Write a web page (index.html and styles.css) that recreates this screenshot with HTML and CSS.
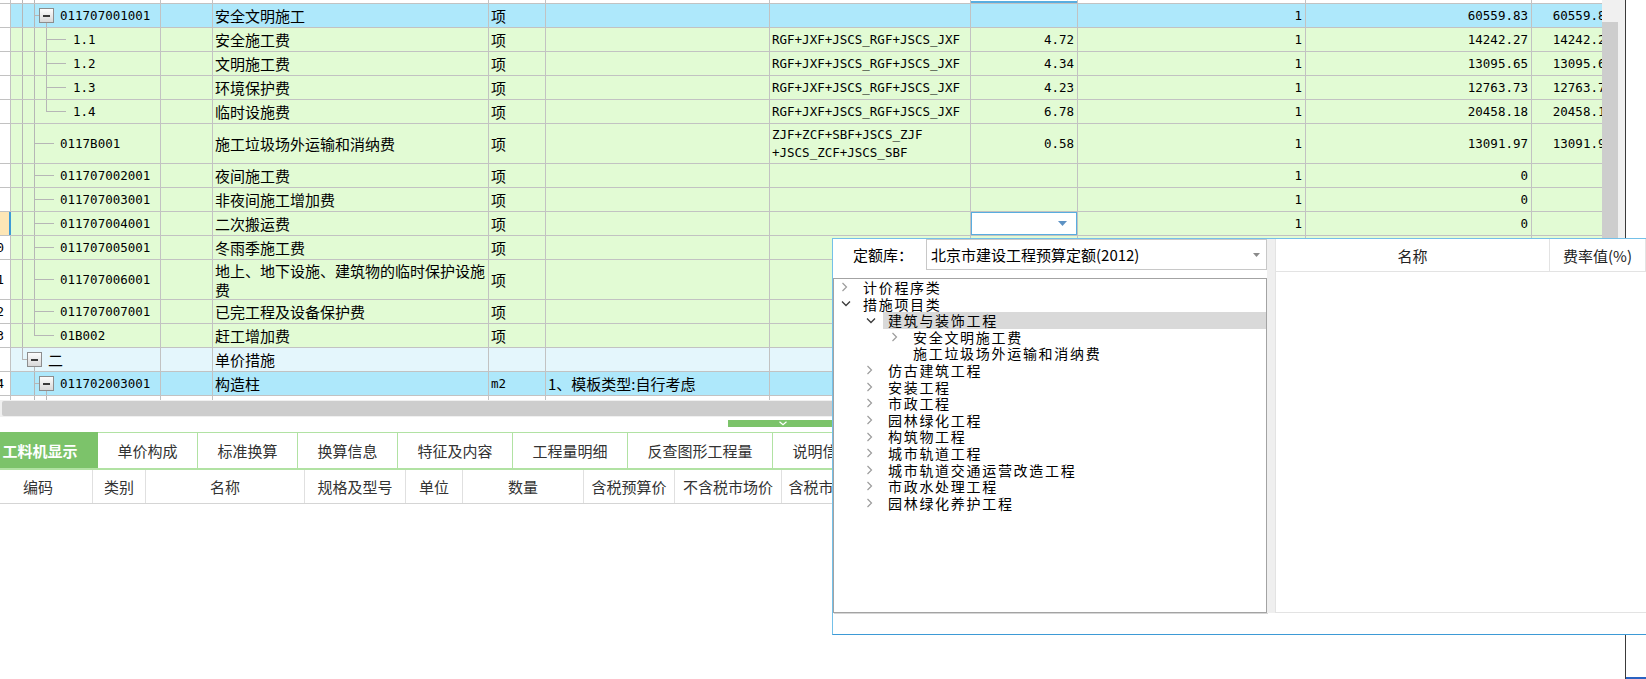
FILE: index.html
```html
<!DOCTYPE html>
<html lang="zh-CN">
<head>
<meta charset="utf-8">
<title>措施项目</title>
<link rel="stylesheet" href="styles.css">
</head>
<body>
<div class="app">
  <div class="top">
    <div class="grid">
      <div class="row part">
        <div class="rn"></div><div class="code t-top"></div><div></div><div></div><div></div><div></div><div></div><div class="fb"></div><div></div><div></div><div></div>
      </div>
      <div class="row blue">
        <div class="rn"></div>
        <div class="code t-p1"><span class="box"></span><span class="ct">011707001001</span></div>
        <div></div><div>安全文明施工</div><div>项</div><div></div><div class="m"></div><div class="m r"></div>
        <div class="m r">1</div><div class="m r">60559.83</div><div class="m r">60559.83</div>
      </div>
      <div class="row green">
        <div class="rn"></div>
        <div class="code t-c2"><span class="ct">1.1</span></div>
        <div></div><div>安全施工费</div><div>项</div><div></div><div class="m">RGF+JXF+JSCS_RGF+JSCS_JXF</div><div class="m r">4.72</div>
        <div class="m r">1</div><div class="m r">14242.27</div><div class="m r">14242.27</div>
      </div>
      <div class="row green">
        <div class="rn"></div>
        <div class="code t-c2"><span class="ct">1.2</span></div>
        <div></div><div>文明施工费</div><div>项</div><div></div><div class="m">RGF+JXF+JSCS_RGF+JSCS_JXF</div><div class="m r">4.34</div>
        <div class="m r">1</div><div class="m r">13095.65</div><div class="m r">13095.65</div>
      </div>
      <div class="row green">
        <div class="rn"></div>
        <div class="code t-c2"><span class="ct">1.3</span></div>
        <div></div><div>环境保护费</div><div>项</div><div></div><div class="m">RGF+JXF+JSCS_RGF+JSCS_JXF</div><div class="m r">4.23</div>
        <div class="m r">1</div><div class="m r">12763.73</div><div class="m r">12763.73</div>
      </div>
      <div class="row green">
        <div class="rn"></div>
        <div class="code t-c2l"><span class="ct">1.4</span></div>
        <div></div><div>临时设施费</div><div>项</div><div></div><div class="m">RGF+JXF+JSCS_RGF+JSCS_JXF</div><div class="m r">6.78</div>
        <div class="m r">1</div><div class="m r">20458.18</div><div class="m r">20458.18</div>
      </div>
      <div class="row green tall">
        <div class="rn"></div>
        <div class="code t-l1"><span class="ct">0117B001</span></div>
        <div></div><div>施工垃圾场外运输和消纳费</div><div>项</div><div></div><div class="m two">ZJF+ZCF+SBF+JSCS_ZJF<br>+JSCS_ZCF+JSCS_SBF</div><div class="m r">0.58</div>
        <div class="m r">1</div><div class="m r">13091.97</div><div class="m r">13091.97</div>
      </div>
      <div class="row green">
        <div class="rn"></div>
        <div class="code t-l1"><span class="ct">011707002001</span></div>
        <div></div><div>夜间施工费</div><div>项</div><div></div><div class="m"></div><div class="m r"></div>
        <div class="m r">1</div><div class="m r">0</div><div class="m r"></div>
      </div>
      <div class="row green">
        <div class="rn"></div>
        <div class="code t-l1"><span class="ct">011707003001</span></div>
        <div></div><div>非夜间施工增加费</div><div>项</div><div></div><div class="m"></div><div class="m r"></div>
        <div class="m r">1</div><div class="m r">0</div><div class="m r"></div>
      </div>
      <div class="row green">
        <div class="rn cur"></div>
        <div class="code t-l1"><span class="ct">011707004001</span></div>
        <div></div><div>二次搬运费</div><div>项</div><div></div><div class="m"></div>
        <div class="fc"><svg width="9" height="5" viewBox="0 0 9 5"><path d="M0 0H9L4.5 5Z" fill="#5d92c4"/></svg></div>
        <div class="m r">1</div><div class="m r">0</div><div class="m r"></div>
      </div>
      <div class="row green">
        <div class="rn m">10</div>
        <div class="code t-l1"><span class="ct">011707005001</span></div>
        <div></div><div>冬雨季施工费</div><div>项</div><div></div><div class="m"></div><div class="m r"></div>
        <div class="m r">1</div><div class="m r">0</div><div class="m r"></div>
      </div>
      <div class="row green tall">
        <div class="rn m">11</div>
        <div class="code t-l1"><span class="ct">011707006001</span></div>
        <div></div><div class="two2">地上、地下设施、建筑物的临时保护设施<br>费</div><div>项</div><div></div><div class="m"></div><div class="m r"></div>
        <div class="m r">1</div><div class="m r">0</div><div class="m r"></div>
      </div>
      <div class="row green">
        <div class="rn m">12</div>
        <div class="code t-l1"><span class="ct">011707007001</span></div>
        <div></div><div>已完工程及设备保护费</div><div>项</div><div></div><div class="m"></div><div class="m r"></div>
        <div class="m r">1</div><div class="m r">0</div><div class="m r"></div>
      </div>
      <div class="row green">
        <div class="rn m">13</div>
        <div class="code t-l1l"><span class="ct">01B002</span></div>
        <div></div><div>赶工增加费</div><div>项</div><div></div><div class="m"></div><div class="m r"></div>
        <div class="m r">1</div><div class="m r">0</div><div class="m r"></div>
      </div>
      <div class="row pale">
        <div class="rn"></div>
        <div class="code t-p0"><span class="box"></span><span>二</span></div>
        <div></div><div>单价措施</div><div></div><div></div><div class="m"></div><div class="m r"></div>
        <div class="m r"></div><div class="m r"></div><div class="m r"></div>
      </div>
      <div class="row blue">
        <div class="rn m">14</div>
        <div class="code t-p1b"><span class="box"></span><span class="ct">011702003001</span></div>
        <div></div><div>构造柱</div><div class="m">m2</div><div>1、模板类型:自行考虑</div><div class="m"></div><div class="m r"></div>
        <div class="m r">1</div><div class="m r"></div><div class="m r"></div>
      </div>
      <div class="row part2">
        <div class="rn"></div><div class="code t-part"></div><div></div><div></div><div></div><div></div><div></div><div></div><div></div><div></div><div></div>
      </div>
    </div>
    <div class="vscroll"><div class="vthumb"></div></div>
    <div class="vgap"></div>
  </div>
  <div class="hscroll"><div class="hthumb"></div></div>
  <div class="togglerow">
    <div class="toggle"><svg width="10" height="5" viewBox="0 0 10 5"><path d="M1.5 0.8L5 3.8L8.5 0.8" fill="none" stroke="#ffffff" stroke-width="1.2"/></svg></div>
  </div>
  <div class="tabs">
    <div class="tab on">工料机显示</div>
    <div class="tab">单价构成</div>
    <div class="tab">标准换算</div>
    <div class="tab">换算信息</div>
    <div class="tab">特征及内容</div>
    <div class="tab">工程量明细</div>
    <div class="tab">反查图形工程量</div>
    <div class="tab">说明信息</div>
  </div>
  <div class="lhead">
    <div>编码</div><div>类别</div><div>名称</div><div>规格及型号</div><div>单位</div><div>数量</div><div>含税预算价</div><div>不含税市场价</div><div>含税市场价</div><div>合价</div>
  </div>
</div>
<div class="outside"></div>

<div class="popup">
  <div class="pmain">
    <div class="pleft">
      <div class="phead">
        <div class="plabel">定额库：</div>
        <div class="combo"><span>北京市建设工程预算定额(2012)</span><svg width="7" height="4" viewBox="0 0 7 4"><path d="M0 0H7L3.5 4Z" fill="#8a8a8a"/></svg></div>
      </div>
      <div class="ptree">
        <div class="ti l0"><span class="chev"><svg width="7" height="10" viewBox="0 0 7 10"><path d="M1.5 1L5.5 5L1.5 9" fill="none" stroke="#9c9c9c" stroke-width="1.2"/></svg></span><span class="tl">计价程序类</span></div>
        <div class="ti l0"><span class="chev"><svg width="10" height="7" viewBox="0 0 10 7"><path d="M1 1.5L5 5.5L9 1.5" fill="none" stroke="#3a3a3a" stroke-width="1.3"/></svg></span><span class="tl">措施项目类</span></div>
        <div class="ti l1 sel"><span class="chev"><svg width="10" height="7" viewBox="0 0 10 7"><path d="M1 1.5L5 5.5L9 1.5" fill="none" stroke="#3a3a3a" stroke-width="1.3"/></svg></span><span class="tl">建筑与装饰工程</span></div>
        <div class="ti l2"><span class="chev"><svg width="7" height="10" viewBox="0 0 7 10"><path d="M1.5 1L5.5 5L1.5 9" fill="none" stroke="#9c9c9c" stroke-width="1.2"/></svg></span><span class="tl">安全文明施工费</span></div>
        <div class="ti l2"><span class="chev"></span><span class="tl">施工垃圾场外运输和消纳费</span></div>
        <div class="ti l1"><span class="chev"><svg width="7" height="10" viewBox="0 0 7 10"><path d="M1.5 1L5.5 5L1.5 9" fill="none" stroke="#9c9c9c" stroke-width="1.2"/></svg></span><span class="tl">仿古建筑工程</span></div>
        <div class="ti l1"><span class="chev"><svg width="7" height="10" viewBox="0 0 7 10"><path d="M1.5 1L5.5 5L1.5 9" fill="none" stroke="#9c9c9c" stroke-width="1.2"/></svg></span><span class="tl">安装工程</span></div>
        <div class="ti l1"><span class="chev"><svg width="7" height="10" viewBox="0 0 7 10"><path d="M1.5 1L5.5 5L1.5 9" fill="none" stroke="#9c9c9c" stroke-width="1.2"/></svg></span><span class="tl">市政工程</span></div>
        <div class="ti l1"><span class="chev"><svg width="7" height="10" viewBox="0 0 7 10"><path d="M1.5 1L5.5 5L1.5 9" fill="none" stroke="#9c9c9c" stroke-width="1.2"/></svg></span><span class="tl">园林绿化工程</span></div>
        <div class="ti l1"><span class="chev"><svg width="7" height="10" viewBox="0 0 7 10"><path d="M1.5 1L5.5 5L1.5 9" fill="none" stroke="#9c9c9c" stroke-width="1.2"/></svg></span><span class="tl">构筑物工程</span></div>
        <div class="ti l1"><span class="chev"><svg width="7" height="10" viewBox="0 0 7 10"><path d="M1.5 1L5.5 5L1.5 9" fill="none" stroke="#9c9c9c" stroke-width="1.2"/></svg></span><span class="tl">城市轨道工程</span></div>
        <div class="ti l1"><span class="chev"><svg width="7" height="10" viewBox="0 0 7 10"><path d="M1.5 1L5.5 5L1.5 9" fill="none" stroke="#9c9c9c" stroke-width="1.2"/></svg></span><span class="tl">城市轨道交通运营改造工程</span></div>
        <div class="ti l1"><span class="chev"><svg width="7" height="10" viewBox="0 0 7 10"><path d="M1.5 1L5.5 5L1.5 9" fill="none" stroke="#9c9c9c" stroke-width="1.2"/></svg></span><span class="tl">市政水处理工程</span></div>
        <div class="ti l1"><span class="chev"><svg width="7" height="10" viewBox="0 0 7 10"><path d="M1.5 1L5.5 5L1.5 9" fill="none" stroke="#9c9c9c" stroke-width="1.2"/></svg></span><span class="tl">园林绿化养护工程</span></div>
      </div>
    </div>
    <div class="pgap"></div>
    <div class="pright">
      <div class="rhead"><div class="rc1">名称</div><div class="rc2">费率值(%)</div></div>
    </div>
  </div>
</div>
</body>
</html>
```

FILE: styles.css
```css
:root {
  --g: linear-gradient(#b6b6b6, #b6b6b6);
  --line: #c2c2c2;
}
html, body { margin: 0; padding: 0; }
body {
  width: 1646px;
  height: 679px;
  overflow: hidden;
  display: flex;
  position: relative;
  background: #fff;
  color: #000;
  font-family: "Noto Sans CJK SC", "Liberation Sans", sans-serif;
}
.app {
  width: 1626px;
  flex: none;
  box-sizing: border-box;
  border-right: 1px solid #3a3a3a;
  display: flex;
  flex-direction: column;
}
.outside {
  flex: 1;
  box-sizing: border-box;
  border-bottom: 2px solid #2a62c2;
}
.top { display: flex; height: 400px; flex: none; }
.grid { width: 1602px; overflow: hidden; flex: none; }
.row {
  display: grid;
  grid-template-columns: 11px 150px 52px 276px 57px 224px 201px 107px 228px 226px 85px;
  width: 1617px;
  height: 24px;
  box-sizing: border-box;
  border-bottom: 1px solid var(--line);
}
.row.tall { height: 40px; }
.row.part { height: 4px; }
.row.part2 { height: 4px; border-bottom: 0; }
.row > div {
  box-sizing: border-box;
  border-right: 1px solid var(--line);
  display: flex;
  align-items: center;
  padding: 0 2px;
  overflow: hidden;
  white-space: nowrap;
  font-size: 15px;
  min-width: 0;
}
.green { background: #e2fbd4; }
.blue { background: #aee8fb; }
.pale { background: #e4f6fc; }
.row > .m, .ct {
  font-family: "DejaVu Sans Mono", "Liberation Mono", monospace;
  font-size: 12.5px;
}
.row > .r { justify-content: flex-end; padding-right: 3px; }
.row > .two { white-space: nowrap; line-height: 18px; }
.row > .two2 { line-height: 19px; }
.row > .rn { background: #fff; justify-content: flex-end; padding: 0 6px 0 0; }
.row > .rn.cur { background: #fde6b6; border-right: 2px solid #3d9bd8; }
.row > .fc {
  background: #fff;
  box-shadow: inset 0 0 0 1px #58ade0;
  justify-content: flex-end;
  padding-right: 10px;
}
.row > .fb { box-shadow: inset 0 -2px 0 #58ade0; }

/* tree connector lines in the code column */
.row > .code { background-repeat: no-repeat; }
.row > .t-top {
  background-image: var(--g), var(--g);
  background-position: 11px 0, 23px 0;
  background-size: 1px 100%, 1px 100%;
}
.row > .t-p1 {
  padding-left: 28px;
  background-image: var(--g), var(--g), var(--g), var(--g);
  background-position: 11px 0, 23px 0, 23px 50%, 35px 100%;
  background-size: 1px 100%, 1px 100%, 5px 1px, 1px calc(50% - 7px);
}
.row > .t-c2 {
  padding-left: 62px;
  background-image: var(--g), var(--g), var(--g), var(--g);
  background-position: 11px 0, 23px 0, 35px 0, 35px 50%;
  background-size: 1px 100%, 1px 100%, 1px 100%, 20px 1px;
}
.row > .t-c2l {
  padding-left: 62px;
  background-image: var(--g), var(--g), var(--g), var(--g);
  background-position: 11px 0, 23px 0, 35px 0, 35px 50%;
  background-size: 1px 100%, 1px 100%, 1px 50%, 20px 1px;
}
.row > .t-l1 {
  padding-left: 49px;
  background-image: var(--g), var(--g), var(--g);
  background-position: 11px 0, 23px 0, 23px 50%;
  background-size: 1px 100%, 1px 100%, 20px 1px;
}
.row > .t-l1l {
  padding-left: 49px;
  background-image: var(--g), var(--g), var(--g);
  background-position: 11px 0, 23px 0, 23px 50%;
  background-size: 1px 100%, 1px 50%, 20px 1px;
}
.row > .t-p0 {
  padding-left: 16px;
  background-image: var(--g), var(--g), var(--g);
  background-position: 11px 0, 11px 50%, 23px 100%;
  background-size: 1px 50%, 5px 1px, 1px calc(50% - 7px);
}
.row > .t-p1b {
  padding-left: 28px;
  background-image: var(--g), var(--g), var(--g);
  background-position: 23px 0, 23px 50%, 35px 100%;
  background-size: 1px 100%, 5px 1px, 1px calc(50% - 7px);
}
.row > .t-part {
  background-image: var(--g), var(--g);
  background-position: 23px 0, 35px 0;
  background-size: 1px 100%, 1px 100%;
}
.box {
  width: 15px;
  height: 15px;
  flex: none;
  box-sizing: border-box;
  border: 1px solid #8d8d8d;
  background: linear-gradient(#fdfdfd, #d8d8d8);
  margin-right: 6px;
  display: flex;
  align-items: center;
  justify-content: center;
}
.box::before {
  content: "";
  width: 7px;
  height: 2px;
  background: #3a3a3a;
}

/* scrollbars */
.vscroll {
  width: 16px;
  flex: none;
  background: #f0f0f0;
  padding-top: 22px;
  box-sizing: border-box;
  display: flex;
}
.vthumb { flex: 1; background: #cdcdcd; }
.vgap { width: 7px; flex: none; background: #f0f0f0; }
.hscroll {
  height: 17px;
  flex: none;
  background: #f0f0f0;
  padding: 1px 0 1px 2px;
  box-sizing: border-box;
  display: flex;
}
.hthumb { width: 1500px; background: #cdcdcd; border-radius: 2px; }
.togglerow {
  height: 15px;
  flex: none;
  padding: 3px 0 0 728px;
  box-sizing: border-box;
}
.toggle {
  width: 110px;
  height: 7px;
  background: #7cc36a;
  display: flex;
  align-items: center;
  justify-content: center;
}

/* lower panel */
.tabs {
  height: 38px;
  flex: none;
  display: flex;
  margin-left: -17px;
  box-sizing: border-box;
  border-bottom: 2px solid #b1e2a3;
}
.tab {
  flex: none;
  padding: 0 19.5px;
  border-top: 1px solid #b1e2a3;
  border-right: 1px solid #b1e2a3;
  display: flex;
  align-items: center;
  font-size: 15px;
  color: #333;
  white-space: nowrap;
}
.tab.on {
  background: #7cc36a;
  border-color: #7cc36a;
  color: #fff;
  font-weight: 700;
}
.lhead {
  height: 34px;
  flex: none;
  display: grid;
  grid-template-columns: 109px 53px 159px 101px 57px 121px 91px 107px 89px 120px;
  margin-left: -16px;
  box-sizing: border-box;
  border-bottom: 1px solid #d5d5d5;
}
.lhead > div {
  border-right: 1px solid #e0e0e0;
  display: flex;
  align-items: center;
  justify-content: center;
  font-size: 15px;
  color: #333;
  white-space: nowrap;
  overflow: hidden;
}

/* popup */
.popup {
  position: absolute;
  left: 832px;
  top: 238px;
  width: 830px;
  height: 397px;
  box-sizing: border-box;
  border: 1px solid #74c0e8;
  border-bottom-color: #3d9ad6;
  background: #fff;
  display: flex;
  flex-direction: column;
}
.pmain { height: 374px; flex: none; display: flex; }
.pleft { width: 434px; flex: none; display: flex; flex-direction: column; }
.phead { height: 39px; flex: none; display: flex; align-items: flex-start; }
.plabel {
  width: 93px;
  height: 31px;
  box-sizing: border-box;
  padding-left: 20px;
  display: flex;
  align-items: center;
  font-size: 15px;
}
.combo {
  width: 341px;
  height: 31px;
  box-sizing: border-box;
  border: 1px solid #c8c8c8;
  display: flex;
  align-items: center;
  justify-content: space-between;
  padding: 0 6px 0 4px;
  font-size: 15px;
  white-space: nowrap;
}
.ptree {
  flex: 1;
  box-sizing: border-box;
  border: 1px solid #a3a3a3;
  box-shadow: 1px 1px 0 #d6d6d6;
  overflow: hidden;
}
.ti {
  height: 16.6px;
  display: flex;
  align-items: center;
  padding-left: 4px;
  font-size: 14px;
  letter-spacing: 1.7px;
  line-height: 16.6px;
  white-space: nowrap;
}
.ti.l1 { padding-left: 29px; }
.ti.l2 { padding-left: 54px; }
.chev {
  width: 20px;
  flex: none;
  display: flex;
  align-items: center;
  padding-left: 3px;
  box-sizing: border-box;
}
.tl { flex: 1; padding-left: 5px; }
.ti.sel .tl { background: #d9d9d9; }
.pgap { width: 8px; flex: none; background: #efefef; }
.pright {
  flex: 1;
  box-sizing: border-box;
  border: 1px solid #e3e3e3;
  border-top: 0;
  display: flex;
  flex-direction: column;
}
.rhead { height: 32px; flex: none; display: flex; border-bottom: 1px solid #e3e3e3; }
.rhead > div {
  box-sizing: border-box;
  display: flex;
  align-items: center;
  justify-content: center;
  font-size: 15px;
  color: #222;
  border-right: 1px solid #e3e3e3;
}
.rc1 { width: 274px; }
.rc2 { width: 96px; }
```
